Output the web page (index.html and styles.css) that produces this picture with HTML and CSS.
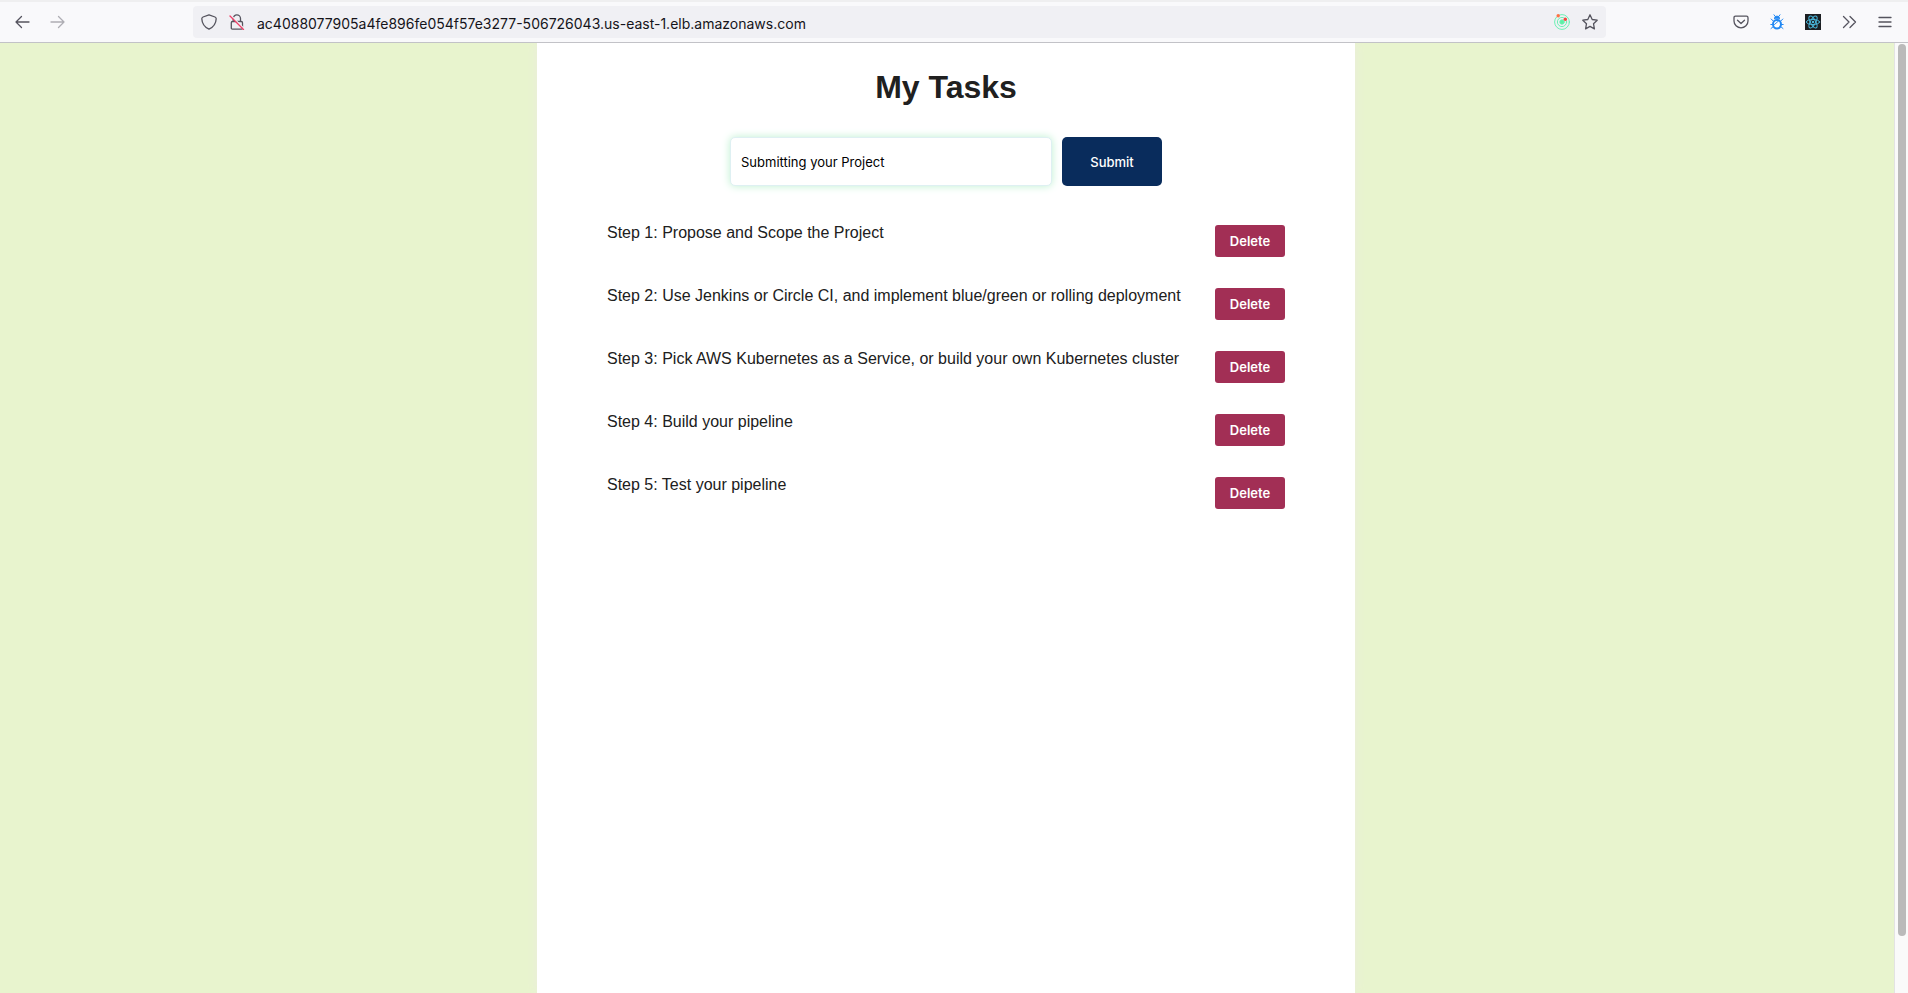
FILE: index.html
```html
<!DOCTYPE html>
<html lang="en">
<head>
<meta charset="utf-8">
<title>My Tasks</title>
<link rel="stylesheet" href="styles.css">
</head>
<body>
<header class="toolbar">
  <nav class="history" aria-label="History">
    <button class="icon-button" aria-label="Back"><svg width="16" height="16" viewBox="0 0 16 16"><path d="M15 8H2M7.500 2.500L2 8l5.500 5.500"/></svg></button>
    <button class="icon-button faded" aria-label="Forward"><svg width="16" height="16" viewBox="0 0 16 16"><path d="M1 8h13M8.500 2.500L14 8l-5.500 5.500"/></svg></button>
  </nav>
  <div class="address">
    <button class="icon-button" aria-label="Tracking protection"><svg width="16" height="16" viewBox="0 0 16 16"><path d="M8 .8L14 3c.8.300 1.200.900 1.200 1.700C15 9.500 12.500 13 8 15.200 3.500 13 1 9.500.8 4.700.8 3.900 1.200 3.300 2 3z"/></svg></button>
    <button class="icon-button" aria-label="Connection not secure"><svg width="16" height="16" viewBox="0 0 16 16"><path d="M4.200 7.500V4.500a3.500 3.500 0 0 1 7.300 0v3M3.500 7.500h8.800q1.200 0 1.200 1.200V14q0 1.200-1.200 1.200H3.500q-1.200 0-1.200-1.200V8.700q0-1.200 1.200-1.200z"/><path class="halo" d="M1.800 1.200L15 14.500"/><path class="slash" d="M1 2l13.500 13.500"/></svg></button>
    <input class="url" type="text" aria-label="Address" value="ac4088077905a4fe896fe054f57e3277-506726043.us-east-1.elb.amazonaws.com">
    <button class="icon-button" aria-label="Extension"><svg class="radar" width="16" height="16" viewBox="0 0 16 16"><circle cx="8" cy="8" r="7.400"/><circle cx="8" cy="8" r="4.600"/><circle class="core" cx="8" cy="8" r="2.200"/><circle class="orange" cx="4.200" cy="1.800" r="1.700"/><circle class="red" cx="11.300" cy="5.200" r="1.700"/></svg></button>
    <button class="icon-button" aria-label="Bookmark this page"><svg width="16" height="16" viewBox="0 0 16 16"><path d="M8 .8l2.200 4.700 5 .7-3.700 3.500.9 5.200L8 12.400l-4.400 2.500.9-5.200L.8 6.200l5-.7z"/></svg></button>
  </div>
  <nav class="tools" aria-label="Tools">
    <button class="icon-button" aria-label="Pocket"><svg width="16" height="16" viewBox="0 0 16 16"><path d="M2.500 2.200h11q1.500 0 1.500 1.500V7a7 6.800 0 0 1-14 0V3.700q0-1.500 1.500-1.500zM4.500 6.200L8 9.500l3.500-3.300"/></svg></button>
    <button class="icon-button" aria-label="Bug extension"><svg class="bug" width="16" height="16" viewBox="0 0 16 16"><path class="solid" d="M5.500 4.500C5.500 2.800 6.500 2.200 8 2.200s2.500.6 2.500 2.300z"/><path d="M5 .8l1.300 1.700M11 .8L9.700 2.500M2.200 5l2 2M13.800 5l-2 2M1.800 10.500h1.500M14.200 10.500h-1.500M2 14.500l1.800-1.500M14 14.500L12.200 13"/><ellipse class="shell" cx="8" cy="10.200" rx="4" ry="4.300"/><path d="M5.500 10.500l4-3.500"/></svg></button>
    <button class="icon-button" aria-label="React developer tools"><svg class="react" width="16" height="16" viewBox="0 0 16 16"><path class="tile" d="M0 0h16v16H0z"/><ellipse cx="8" cy="8" rx="6.600" ry="2.600"/><ellipse cx="8" cy="8" rx="6.600" ry="2.600" transform="rotate(60 8 8)"/><ellipse cx="8" cy="8" rx="6.600" ry="2.600" transform="rotate(120 8 8)"/><circle class="core" cx="8" cy="8" r="1.200"/></svg></button>
    <button class="icon-button" aria-label="More tools"><svg width="16" height="16" viewBox="0 0 16 16"><path d="M2.500 2.500L8 8l-5.500 5.500M9 2.500L14.500 8 9 13.500"/></svg></button>
    <button class="icon-button" aria-label="Menu"><svg width="16" height="16" viewBox="0 0 16 16"><path d="M2 3.500h12M2 8h12M2 12.500h12"/></svg></button>
  </nav>
</header>
<div class="viewport">
  <div class="page">
    <main class="card">
      <h1 class="title">My Tasks</h1>
      <form class="new-task">
        <input class="task-input" type="text" aria-label="New task" value="Submitting your Project">
        <button class="submit" type="button">Submit</button>
      </form>
      <ul class="tasks">
        <li class="task"><span>Step 1: Propose and Scope the Project</span><button class="delete">Delete</button></li>
        <li class="task"><span>Step 2: Use Jenkins or Circle CI, and implement blue/green or rolling deployment</span><button class="delete">Delete</button></li>
        <li class="task"><span>Step 3: Pick AWS Kubernetes as a Service, or build your own Kubernetes cluster</span><button class="delete">Delete</button></li>
        <li class="task"><span>Step 4: Build your pipeline</span><button class="delete">Delete</button></li>
        <li class="task"><span>Step 5: Test your pipeline</span><button class="delete">Delete</button></li>
      </ul>
    </main>
  </div>
  <div class="scrollbar"><div class="thumb"></div></div>
</div>
</body>
</html>
```
FILE: styles.css
```css
* { box-sizing: border-box; }

body {
  margin: 0;
  height: 100vh;
  display: flex;
  flex-direction: column;
  overflow: hidden;
  font-family: "Liberation Sans", Arial, sans-serif;
  font-size: 16px;
  color: #202020;
}

button, input { font-family: Inter, sans-serif; }

.toolbar {
  flex: none;
  display: flex;
  align-items: center;
  padding: 4px 15px 4px 14px;
  border-top: 2px solid #efeff0;
  border-bottom: 1px solid #c2c2c7;
  background: #f9f9fb;
}

.history { display: flex; gap: 20px; width: 179px; }

.icon-button {
  flex: none;
  display: flex;
  padding: 0;
  border: 0;
  background: none;
}

.icon-button svg {
  fill: none;
  stroke: #55545e;
  stroke-width: 1.3;
  stroke-linecap: round;
  stroke-linejoin: round;
}

.faded { opacity: 0.45; }

.icon-button .halo { stroke: #f0f0f4; }
.icon-button .slash { stroke: #f04068; }

.icon-button .radar { stroke: #6cf0b4; stroke-width: 1; }
.radar .core { fill: #5cf0a4; }
.radar .orange { fill: #ff7043; stroke: none; }
.radar .red { fill: #f4453c; stroke: none; }

.icon-button .bug { stroke: #2188f3; stroke-width: 1; }
.bug .solid { fill: #2188f3; }
.bug .shell { stroke-width: 2; fill: #ffffff; }

.icon-button .react { stroke: #4ab8dc; stroke-width: 1; }
.react .tile { fill: #1d1f22; stroke: none; }
.react .core { fill: #4ab8dc; stroke: none; }

.address {
  flex: 1;
  display: flex;
  align-items: center;
  gap: 12px;
  height: 32px;
  padding: 0 8px;
  border-radius: 4px;
  background: #f0f0f4;
}

.url {
  flex: 1;
  min-width: 0;
  height: 32px;
  padding: 2px 0 0;
  border: 0;
  outline: 0;
  background: none;
  font-size: 14px;
  color: #15141a;
}

.tools {
  display: flex;
  justify-content: flex-end;
  gap: 20px;
  width: 287px;
}

.viewport { flex: 1; min-height: 0; display: flex; }

.page {
  flex: 1;
  min-width: 0;
  display: flex;
  justify-content: center;
  padding-right: 2px;
  overflow: hidden;
  background: #e8f4ce;
}

.card {
  width: 100%;
  max-width: 818px;
  padding: 24px 70px;
  background: #ffffff;
  box-shadow: 0 0 10px 0 #ebecde;
}

.title {
  margin: 0;
  font-size: 32px;
  line-height: 40px;
  text-align: center;
}

.new-task {
  display: flex;
  justify-content: center;
  gap: 10px;
  margin: 30px 0 39px;
}

.task-input {
  width: 322px;
  height: 49px;
  padding: 0 10px;
  border: 1px solid #def0f2;
  border-radius: 5px;
  outline: 0;
  background: #ffffff;
  box-shadow: 0 0 8px #bdf0d0;
  font-size: 13px;
  color: #000000;
}

.submit {
  width: 100px;
  padding: 0;
  border: 0;
  border-radius: 5px;
  background: #092c5c;
  font-size: 13px;
  font-weight: 500;
  color: #ffffff;
}

.tasks {
  display: grid;
  gap: 31px;
  margin: 0;
  padding: 0;
  list-style: none;
}

.task {
  display: flex;
  justify-content: space-between;
  line-height: 16px;
}

.delete {
  width: 70px;
  height: 32px;
  padding: 0;
  border: 0;
  border-radius: 3px;
  background: #a22f55;
  font-size: 13px;
  font-weight: 600;
  color: #ffffff;
}

.scrollbar {
  flex: none;
  width: 14px;
  padding: 1px 2px 0 3px;
  border-left: 1px solid #e3e3e3;
  background: #fafafa;
}

.thumb {
  height: 94%;
  border-radius: 4px;
  background: #bababa;
}
```
